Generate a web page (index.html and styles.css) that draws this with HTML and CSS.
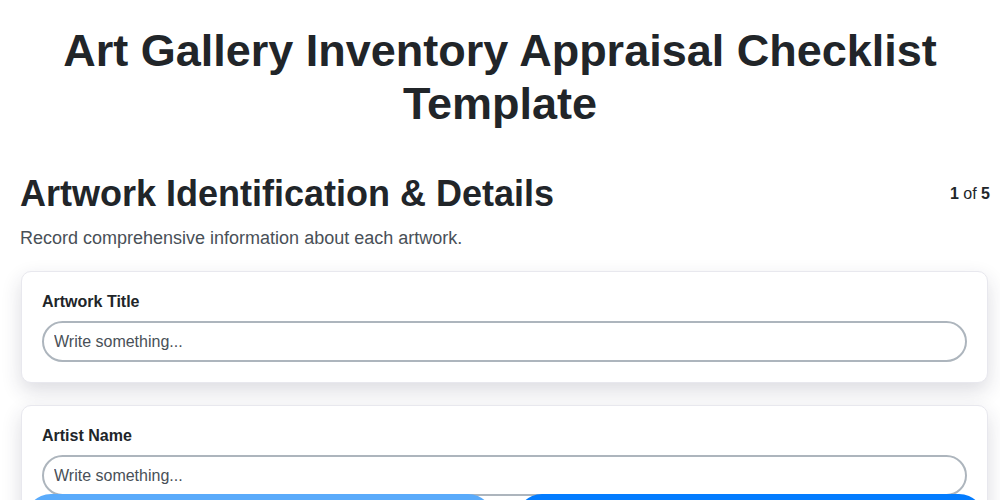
FILE: index.html
```html
<!DOCTYPE html>
<html lang="en">
<head>
  <meta charset="UTF-8">
  <meta name="viewport" content="width=device-width, initial-scale=1.0">
  <title>Art Gallery Inventory Appraisal Checklist Template</title>
  <link rel="stylesheet" href="styles.css">
</head>
<body>
  <div class="container">
    <h1>Art Gallery Inventory Appraisal Checklist Template</h1>

    <div class="step-head">
      <h2>Artwork Identification &amp; Details</h2>
      <div class="counter"><b>1</b> of <b>5</b></div>
    </div>
    <p class="desc">Record comprehensive information about each artwork.</p>

    <div class="card">
      <label for="title">Artwork Title</label>
      <input id="title" type="text" placeholder="Write something...">
    </div>

    <div class="card">
      <label for="artist">Artist Name</label>
      <input id="artist" type="text" placeholder="Write something...">
    </div>

    <div class="card">
      <label for="year">Year Created</label>
      <input id="year" type="text" placeholder="Write something...">
    </div>
  </div>

  <div class="nav">
    <button class="btn prev">Previous</button>
    <button class="btn next">Next</button>
  </div>
</body>
</html>
```

FILE: styles.css
```css
body {
  font-family: "Liberation Sans", Arial, sans-serif;
  color: #212529;
  background: #fff;
  margin: 0;
}
.container {
  padding: 24px 20px 80px 20px;
}
h1 {
  font-size: 45px;
  line-height: 53px;
  text-align: center;
  margin: 0 0 42px;
}
.step-head {
  display: flex;
  justify-content: space-between;
  align-items: center;
  margin-right: -10px;
}
h2 {
  font-size: 36px;
  line-height: 43px;
  margin: 0;
}
.counter {
  font-size: 16px;
}
.desc {
  font-size: 18px;
  line-height: 21px;
  color: #495057;
  margin: 13px 0 22px;
}
.card {
  background: #fff;
  border: 1px solid #e8e8ee;
  border-radius: 10px;
  padding: 20px;
  margin: 0 -8px 22px 1px;
  box-shadow: 0 8px 20px rgba(40,40,70,0.16);
}
label {
  display: block;
  font-weight: bold;
  font-size: 16px;
  line-height: 19px;
  margin-bottom: 10px;
}
input {
  width: 100%;
  height: 41px;
  box-sizing: border-box;
  border: 2px solid #adb5bd;
  border-radius: 21px;
  padding: 0 10px;
  font-family: inherit;
  font-size: 16px;
  color: #212529;
}
input::placeholder {
  color: #495057;
}
.nav {
  position: fixed;
  left: 0;
  right: 0;
  bottom: -46px;
  display: flex;
  gap: 22px;
  padding: 0 15px 0 25px;
}
.btn {
  flex: 1;
  height: 52px;
  border: none;
  border-radius: 26px;
  color: #fff;
  font-size: 16px;
  font-weight: bold;
  font-family: inherit;
}
.prev {
  background: #5aabfb;
}
.next {
  background: #037cff;
}
```
